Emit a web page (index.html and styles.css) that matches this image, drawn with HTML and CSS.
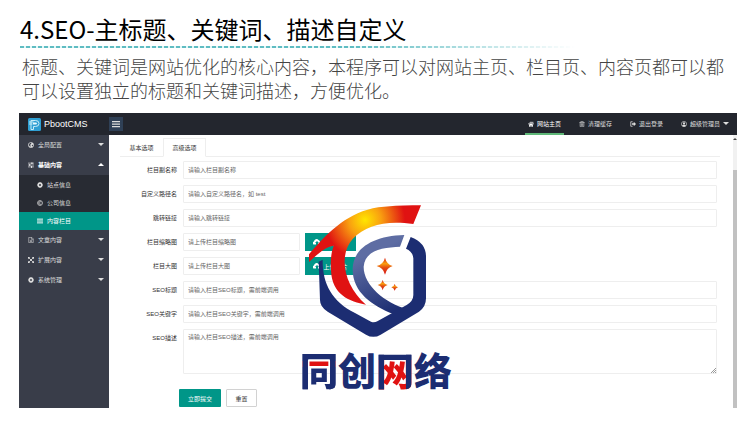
FILE: index.html
```
<!DOCTYPE html>
<html lang="zh-CN">
<head>
    <meta charset="UTF-8">
    <meta name="viewport" content="width=device-width, initial-scale=1.0">
    <title>SEO自定义</title>
    <link rel="stylesheet" href="styles.css">
</head>
<body>
    <svg class="sprite" aria-hidden="true">
        <symbol id="i-globe" viewBox="0 0 16 16"><circle cx="8" cy="8" r="7.5" fill="currentColor"/><path d="M5 2l4 1-1 3-3 1 2 3-1 3-4-5zM11 7l3 1-2 4-2-2z" fill="#393d49"/></symbol>
        <symbol id="i-sliders" viewBox="0 0 16 16"><path d="M0 3h16M0 8h16M0 13h16" stroke="currentColor" stroke-width="1.500"/><path d="M9 1h3v4H9zM3 6h3v4H3zM8 11h3v4H8z" fill="currentColor"/></symbol>
        <symbol id="i-gear" viewBox="0 0 16 16"><circle cx="8" cy="8" r="4.5" fill="none" stroke="currentColor" stroke-width="4"/><path d="M8 0v3M8 13v3M0 8h3M13 8h3M2.500 2.500l2 2M11.500 11.500l2 2M13.500 2.500l-2 2M4.500 11.500l-2 2" stroke="currentColor" stroke-width="3"/></symbol>
        <symbol id="i-copy" viewBox="0 0 16 16"><circle cx="8" cy="8" r="6.500" fill="none" stroke="currentColor" stroke-width="2"/><path d="M11 6a3.500 3.500 0 1 0 0 4" fill="none" stroke="currentColor" stroke-width="2"/></symbol>
        <symbol id="i-bars" viewBox="0 0 16 16"><path d="M0 3h16M0 8h16M0 13h16" stroke="currentColor" stroke-width="2.500"/></symbol>
        <symbol id="i-file" viewBox="0 0 16 16"><path d="M2 1h8l4 4v10H2zM9 1v5h5M5 9h6M5 12h6" fill="none" stroke="currentColor" stroke-width="1.500"/></symbol>
        <symbol id="i-expand" viewBox="0 0 16 16"><path d="M3 3l10 10M13 3L3 13" stroke="currentColor" stroke-width="2.500"/><path d="M0 0h6L0 6zM16 0v6l-6-6zM0 16v-6l6 6zM16 16h-6l6-6z" fill="currentColor"/></symbol>
        <symbol id="i-home" viewBox="0 0 16 16"><path d="M8 1l8 7-1 1-7-6-7 6-1-1zM12 2h2v4l-2-2zM3 9l5-4 5 4v6H9v-4H7v4H3z" fill="currentColor"/></symbol>
        <symbol id="i-trash" viewBox="0 0 16 16"><path d="M1 4h14M5 4V1h6v3M3 4v11h10V4M6 6v7M8 6v7M10 6v7" fill="none" stroke="currentColor" stroke-width="1.500"/></symbol>
        <symbol id="i-out" viewBox="0 0 16 16"><path d="M7 2H2v12h5" fill="none" stroke="currentColor" stroke-width="2"/><path d="M5 6h5V2l6 6-6 6v-4H5z" fill="currentColor"/></symbol>
        <symbol id="i-user" viewBox="0 0 16 16"><circle cx="8" cy="8" r="7" fill="none" stroke="currentColor" stroke-width="1.500"/><circle cx="8" cy="6" r="3" fill="currentColor"/><path d="M3 13q0-4 5-4t5 4q-5 4-10 0z" fill="currentColor"/></symbol>
        <symbol id="i-cloud" viewBox="0 0 16 16"><path d="M4 13H3a3 3 0 0 1-1-6 5 5 0 0 1 9-3 4 4 0 0 1 3 4 3 3 0 0 1-1 5h-3v-3h2L8 6l-4 4h2v3z" fill="currentColor"/></symbol>
    </svg>

    <header class="intro">
        <h1>4.SEO-主标题、关键词、描述自定义</h1>
        <div class="dashes"></div>
        <p>标题、关键词是网站优化的核心内容，本程序可以对网站主页、栏目页、内容页都可以都<br>可以设置独立的标题和关键词描述，方便优化。</p>
    </header>

    <main class="admin">
        <div class="topbar">
            <a class="brand" href="#">
                <svg viewBox="0 0 26 26" aria-hidden="true">
                    <rect width="26" height="26" rx="3" fill="#2f9fd3"/>
                    <path d="M2 8h9M2 12h7M6 23V5h9q7 0 7 6t-7 6h-4v6z" fill="none" stroke="#c5ecf8" stroke-width="2"/>
                    <path d="M10 13V9h5q3 0 3 2t-3 2z" fill="#e8f8fd"/>
                </svg>
                <span>PbootCMS</span>
            </a>
            <button class="toggle" type="button" aria-label="菜单"><svg class="icon"><use href="#i-bars"/></svg></button>
            <nav class="topnav">
                <a class="current" href="#"><svg class="icon"><use href="#i-home"/></svg>网站主页</a>
                <a href="#"><svg class="icon"><use href="#i-trash"/></svg>清理缓存</a>
                <a href="#"><svg class="icon"><use href="#i-out"/></svg>退出登录</a>
                <a href="#"><svg class="icon"><use href="#i-user"/></svg>超级管理员<i class="caret"></i></a>
            </nav>
        </div>

        <div class="body">
            <nav class="sidebar">
                <a href="#"><svg class="icon"><use href="#i-globe"/></svg>全局配置<i class="caret"></i></a>
                <a class="open" href="#"><svg class="icon"><use href="#i-sliders"/></svg>基础内容<i class="caret up"></i></a>
                <div class="submenu">
                    <a href="#"><svg class="icon"><use href="#i-gear"/></svg>站点信息</a>
                    <a href="#"><svg class="icon"><use href="#i-copy"/></svg>公司信息</a>
                    <a class="active" href="#"><svg class="icon"><use href="#i-bars"/></svg>内容栏目</a>
                </div>
                <a href="#"><svg class="icon"><use href="#i-file"/></svg>文章内容<i class="caret"></i></a>
                <a href="#"><svg class="icon"><use href="#i-expand"/></svg>扩展内容<i class="caret"></i></a>
                <a href="#"><svg class="icon"><use href="#i-gear"/></svg>系统管理<i class="caret"></i></a>
            </nav>

            <section class="content">
                <div class="tabs">
                    <button type="button">基本选项</button>
                    <button class="selected" type="button">高级选项</button>
                </div>
                <form>
                    <div class="row">
                        <label for="subname">栏目副名称</label>
                        <input type="text" id="subname" placeholder="请输入栏目副名称">
                    </div>
                    <div class="row">
                        <label for="path">自定义路径名</label>
                        <input type="text" id="path" placeholder="请输入自定义路径名，如 test">
                    </div>
                    <div class="row">
                        <label for="link">跳转链接</label>
                        <input type="text" id="link" placeholder="请输入跳转链接">
                    </div>
                    <div class="row">
                        <label for="thumb">栏目缩略图</label>
                        <input class="short" type="text" id="thumb" placeholder="请上传栏目缩略图">
                        <button class="upload" type="button"><svg class="icon"><use href="#i-cloud"/></svg>上传图片</button>
                    </div>
                    <div class="row">
                        <label for="banner">栏目大图</label>
                        <input class="short" type="text" id="banner" placeholder="请上传栏目大图">
                        <button class="upload" type="button"><svg class="icon"><use href="#i-cloud"/></svg>上传图片</button>
                    </div>
                    <div class="row">
                        <label for="seotitle">SEO标题</label>
                        <input type="text" id="seotitle" placeholder="请输入栏目SEO标题，需前端调用">
                    </div>
                    <div class="row">
                        <label for="keywords">SEO关键字</label>
                        <input type="text" id="keywords" placeholder="请输入栏目SEO关键字，需前端调用">
                    </div>
                    <div class="row">
                        <label for="desc">SEO描述</label>
                        <div class="area">
                            <textarea id="desc" placeholder="请输入栏目SEO描述，需前端调用"></textarea>
                            <svg class="grip" viewBox="0 0 5 5" aria-hidden="true"><path d="M0 5l5-5M2 5l3-3M4 5l1-1" stroke="#999"/></svg>
                        </div>
                    </div>
                    <div class="actions">
                        <button class="submit" type="submit">立即提交</button>
                        <button class="reset" type="reset">重置</button>
                    </div>
                </form>
            </section>

            <div class="scrollbar"><i class="arrow"></i><div class="thumb"></div></div>
        </div>

        <div class="watermark">
            <svg viewBox="54 24 360 408" aria-hidden="true">
                <defs>
                    <radialGradient id="fire" gradientUnits="userSpaceOnUse" cx="225" cy="75" r="120">
                        <stop offset="0" stop-color="#ffe600"/>
                        <stop offset=".4" stop-color="#f9a010"/>
                        <stop offset="1" stop-color="#e01212"/>
                    </radialGradient>
                    <linearGradient id="steel" gradientUnits="userSpaceOnUse" x1="230" y1="180" x2="310" y2="350">
                        <stop offset="0" stop-color="#5e6da3"/>
                        <stop offset="1" stop-color="#1c2d72"/>
                    </linearGradient>
                    <linearGradient id="star" x1="0" y1="0" x2="0" y2="1">
                        <stop offset="0" stop-color="#d81818"/>
                        <stop offset=".35" stop-color="#f9a010"/>
                        <stop offset=".6" stop-color="#e24a12"/>
                        <stop offset="1" stop-color="#d81818"/>
                    </linearGradient>
                </defs>
                <path fill="#1c2d72" d="M362 126Q408 143 408 185V310Q408 336 387 350L272 419Q250 432 228 419L113 350Q90 336 90 315L86 200L98 194C97 265 125 318 195 354L243 380Q252 384 262 379L350 330Q370 318 370 300V190Q368 169 348 161Z"/>
                <path fill="url(#steel)" d="M343 120L330 155C280 157 225 165 221 215C220 270 285 325 350 342L310 357C245 332 186 290 188 220C190 160 250 122 343 120Z"/>
                <path fill="url(#fire)" d="M57 178C120 105 175 52 265 37Q330 29 393 31L370 87C290 76 230 88 188 132C145 180 160 270 228 329C180 320 125 300 123 225Q120 180 131 152C105 155 80 180 57 201Z"/>
                <g fill="url(#star)">
                    <path d="M285 188Q290 208 308 213Q290 218 285 239Q280 218 260 213Q280 208 285 188Z"/>
                    <path d="M278 255Q281 267 293 270Q281 273 278 286Q275 273 263 270Q275 267 278 255Z"/>
                    <path d="M314 267Q316 275 324 277Q316 279 314 287Q312 279 304 277Q312 275 314 267Z"/>
                </g>
            </svg>
            <strong><span class="tong">同</span>创<span class="wang">网</span>络</strong>
        </div>
    </main>
</body>
</html>
```
FILE: styles.css
```
* {
    box-sizing: border-box;
}
body {
    margin: 0;
    background: #fff;
    font-family: "Liberation Sans", "Noto Sans CJK SC", sans-serif;
    font-size: 6px;
    color: #333;
}
a {
    color: inherit;
    text-decoration: none;
}
button,
input,
textarea {
    margin: 0;
    font: inherit;
    color: inherit;
}
button {
    display: flex;
    align-items: center;
    justify-content: center;
    padding: 0;
    border: none;
    cursor: pointer;
}
.sprite {
    display: none;
}
.icon {
    flex: none;
    width: 6px;
    height: 6px;
}
.caret {
    border: 3px solid transparent;
    border-top-color: currentColor;
    border-bottom: none;
}
.caret.up {
    border-top: none;
    border-bottom: 3px solid currentColor;
}

/* heading */
.intro {
    padding: 12px 0 11px 20px;
    font-family: "Noto Sans CJK SC", sans-serif;
}
.intro h1 {
    margin: 0;
    font-size: 24px;
    font-weight: 400;
    line-height: 34px;
    color: #000;
}
.intro p {
    margin: 0 0 0 2px;
    padding-top: 6px;
    font-size: 18px;
    font-weight: 300;
    line-height: 24px;
    color: #444;
    white-space: nowrap;
}
.dashes {
    width: 76%;
    height: 2px;
    background: repeating-linear-gradient(to right, #5fbcc2 0 4px, #e2f8f8 4px 6px);
    -webkit-mask-image: linear-gradient(to right, #000 60%, transparent);
    mask-image: linear-gradient(to right, #000 60%, transparent);
}

/* admin window */
.admin {
    position: relative;
    margin: 0 13px 16px 19px;
}
.topbar {
    display: flex;
    align-items: center;
    height: 22px;
    background: #23262e;
    color: #ddd;
}
.brand {
    display: flex;
    align-items: center;
    gap: 3px;
    width: 90px;
    padding-left: 9px;
    font-size: 9px;
    color: #fff;
}
.brand svg {
    width: 13px;
    height: 13px;
}
.toggle {
    width: 14px;
    height: 14px;
    background: #2f4056;
    color: #ddd;
}
.toggle .icon {
    width: 8px;
    height: 8px;
}
.topnav {
    display: flex;
    gap: 12px;
    height: 100%;
    margin-left: auto;
    padding-right: 5px;
}
.topnav a {
    display: flex;
    align-items: center;
    gap: 3px;
    padding: 0 3px;
    border-top: 1px solid transparent;
    border-bottom: 2px solid transparent;
}
.topnav .current {
    border-bottom-color: #5fb878;
    color: #fff;
}
.body {
    display: flex;
}

.sidebar {
    flex: none;
    width: 90px;
    background: #393d49;
    color: #ddd;
}
.sidebar a {
    display: flex;
    align-items: center;
    gap: 4px;
    height: 20px;
    padding: 0 5px 1px 9px;
}
.sidebar .caret {
    margin-left: auto;
}
.sidebar .open {
    color: #fff;
    font-weight: 700;
}
.submenu {
    padding-top: 1px;
    background: #282b33;
}
.submenu a {
    height: 18px;
    padding-left: 18px;
}
.submenu .active {
    background: #009688;
    color: #fff;
}

/* form */
.content {
    flex: 1;
    padding: 3px 13px 1px 11px;
}
.tabs {
    display: flex;
    height: 19px;
    margin-bottom: 4px;
    border-bottom: 1px solid #eee;
}
.tabs button {
    width: 43px;
    height: 19px;
    border: 1px solid transparent;
    background: none;
}
.tabs .selected {
    border-color: #eee;
    border-bottom-color: #fff;
    background: #fff;
}
form {
    display: flex;
    flex-direction: column;
    gap: 6px;
    padding-right: 3px;
}
.row {
    display: flex;
}
.row label {
    width: 57px;
    margin-right: 6px;
    line-height: 18px;
    text-align: right;
}
.row input,
.row textarea {
    flex: 1;
    height: 18px;
    padding: 0 4px;
    border: 1px solid #eee;
    border-radius: 1px;
    background: #fff;
    outline: none;
}
.row .short {
    flex: none;
    width: 117px;
}
::placeholder {
    color: #666;
    opacity: 1;
}
.area {
    position: relative;
    display: flex;
    flex: 1;
}
.row textarea {
    height: 45px;
    padding-top: 2px;
    resize: none;
}
.grip {
    position: absolute;
    right: 1px;
    bottom: 1px;
    width: 5px;
    height: 5px;
}
.upload {
    gap: 2px;
    width: 51px;
    margin-left: 5px;
    background: #009688;
    color: #fff;
}
.upload .icon {
    width: 8px;
    height: 8px;
}
.actions {
    display: flex;
    gap: 5px;
    padding: 9px 0 0 59px;
}
.submit,
.reset {
    height: 18px;
    border-radius: 1px;
}
.submit {
    width: 42px;
    background: #009688;
    color: #fff;
}
.reset {
    width: 31px;
    border: 1px solid #d2d2d2;
    background: #fff;
}

.scrollbar {
    display: flex;
    flex-direction: column;
    align-items: center;
    width: 4px;
    background: #f1f1f1;
}
.arrow {
    margin: 3px 0 30px;
    border: 2px solid transparent;
    border-top: none;
    border-bottom-color: #444;
}
.thumb {
    flex: 1;
    width: 100%;
    background: #c1c1c1;
}

/* logo over the form */
.watermark {
    position: absolute;
    top: 90px;
    left: 281px;
    color: #1c2d72;
    pointer-events: none;
}
.watermark svg {
    display: block;
    width: 120px;
    height: 136px;
    margin-left: 8px;
}
.watermark strong {
    display: block;
    margin-top: 12px;
    font-family: "Noto Sans CJK SC", sans-serif;
    font-size: 38px;
    font-weight: 900;
    line-height: 36px;
}
.watermark span {
    -webkit-background-clip: text;
    background-clip: text;
    color: transparent;
}
.watermark .tong {
    background-image: linear-gradient(#1c2d72 21px, #e01212 21px 26px, #1c2d72 26px);
    background-image: linear-gradient(to right, #1c2d72 9px, transparent 9px 29px, #1c2d72 29px), linear-gradient(#1c2d72 20px, #e01212 20px 26px, #1c2d72 26px);
}
.watermark .wang {
    background-image: linear-gradient(to right, #1c2d72 8px, transparent 8px 30px, #1c2d72 30px), linear-gradient(#1c2d72 19px, #e01212 19px);
}
```
